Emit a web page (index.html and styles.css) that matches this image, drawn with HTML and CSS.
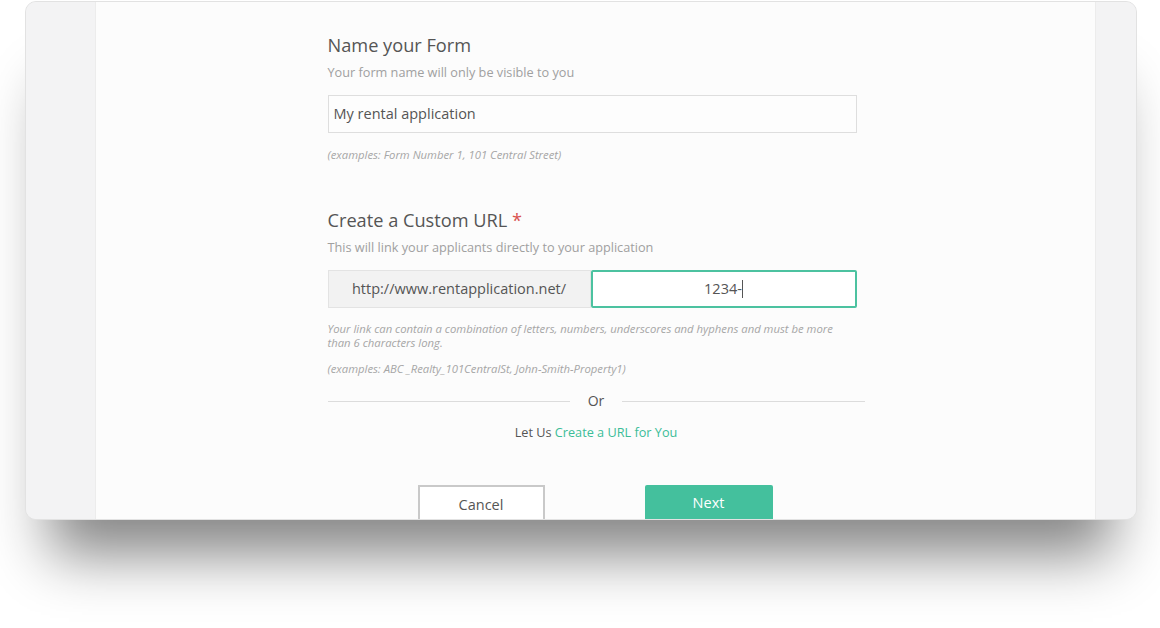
FILE: index.html
```html
<!DOCTYPE html>
<html>
<head>
<meta charset="utf-8">
<link rel="stylesheet" href="styles.css">
</head>
<body>
<div class="frame">
  <div class="side side-left"></div>
  <div class="main">
    <div class="form">
      <h2 class="title">Name your Form</h2>
      <p class="sub">Your form name will only be visible to you</p>
      <div class="input name-input">My rental application</div>
      <p class="hint hint-first">(examples: Form Number 1, 101 Central Street)</p>

      <h2 class="title title-second">Create a Custom URL <span class="req">*</span></h2>
      <p class="sub">This will link your applicants directly to your application</p>
      <div class="url-row">
        <div class="prefix">http://www.rentapplication.net/</div>
        <div class="url-input">1234-<span class="caret"></span></div>
      </div>
      <p class="hint hint-help">Your link can contain a combination of letters, numbers, underscores and hyphens and must be more than 6 characters long.</p>
      <p class="hint hint-ex">(examples: ABC _Realty_101CentralSt, John-Smith-Property1)</p>

      <div class="divider"><span class="line"></span><span class="or">Or</span><span class="line"></span></div>
      <p class="letus">Let Us <a class="link">Create a URL for You</a></p>

      <div class="buttons">
        <div class="btn btn-cancel">Cancel</div>
        <div class="btn btn-next">Next</div>
      </div>
    </div>
  </div>
  <div class="side side-right"></div>
</div>
</body>
</html>
```

FILE: styles.css
```css
html, body {
  margin: 0;
  padding: 0;
  background: #ffffff;
}
body {
  width: 1160px;
  height: 628px;
  overflow: hidden;
  font-family: "Open Sans", "Noto Sans", sans-serif;
}
.frame {
  margin: 1px 0 0 25px;
  width: 1112px;
  height: 519px;
  box-sizing: border-box;
  border: 1px solid #e2e2e2;
  border-radius: 11px;
  overflow: hidden;
  display: flex;
  background: #f3f3f4;
  box-shadow: 0 60px 55px -25px rgba(0, 0, 0, 0.48);
}
.side-left {
  width: 69px;
  flex: none;
  background: #f3f3f4;
  border-right: 1px solid #ececec;
}
.side-right {
  flex: 1;
  background: #f3f3f4;
  border-left: 1px solid #ececec;
}
.main {
  width: 999px;
  flex: none;
  background: #fcfcfc;
  display: flex;
  justify-content: center;
}
.form {
  width: 537px;
  padding-top: 31px;
  padding-left: 1px;
}
.title {
  margin: 0;
  font-size: 18.2px;
  line-height: 24px;
  font-weight: 400;
  color: #555;
}
.title-second {
  margin-top: 46px;
}
.req {
  color: #d9534f;
}
.sub {
  margin: 7px 0 0;
  font-size: 12.7px;
  line-height: 16px;
  color: #a0a0a0;
}
.input {
  margin-top: 15px;
  width: 529px;
  height: 38px;
  box-sizing: border-box;
  border: 1px solid #dedede;
  background: #fdfdfd;
  font-size: 14.5px;
  line-height: 36px;
  padding-left: 5px;
  color: #555;
}
.hint {
  margin: 0;
  font-size: 11.3px;
  line-height: 14px;
  font-style: italic;
  color: #a6a6a6;
}
.hint-first {
  margin-top: 15px;
}
.hint-help {
  margin-top: 14px;
  width: 520px;
}
.hint-ex {
  margin-top: 12px;
}
.url-row {
  margin-top: 15px;
  display: flex;
  width: 529px;
  height: 38px;
}
.prefix {
  width: 263px;
  box-sizing: border-box;
  border: 1px solid #e3e3e3;
  background: #f2f2f2;
  text-align: center;
  font-size: 14.5px;
  line-height: 36px;
  color: #555;
}
.url-input {
  flex: 1;
  box-sizing: border-box;
  border: 2px solid #4cc2a0;
  border-radius: 2px;
  background: #fff;
  text-align: center;
  font-size: 14.5px;
  line-height: 34px;
  color: #555;
  padding-left: 0;
}
.caret {
  display: inline-block;
  width: 1px;
  height: 18px;
  background: #555;
  vertical-align: middle;
  margin-top: -2px;
}
.divider {
  margin-top: 16px;
  display: flex;
  align-items: center;
  height: 18px;
}
.line {
  flex: 1;
  height: 1px;
  background: #dcdcdc;
}
.or {
  font-size: 14px;
  line-height: 18px;
  color: #555;
  padding: 0 18px;
}
.letus {
  margin: 14px 0 0;
  text-align: center;
  font-size: 12.7px;
  line-height: 16px;
  color: #555;
}
.link {
  color: #3bbd98;
}
.buttons {
  margin-top: 45px;
  display: flex;
  justify-content: center;
  gap: 100px;
  padding-right: 2px;
}
.btn {
  width: 127px;
  height: 40px;
  box-sizing: border-box;
  text-align: center;
  font-size: 14.5px;
  line-height: 36px;
}
.btn-cancel {
  border: 2px solid #c9c9c9;
  background: #fff;
  color: #555;
}
.btn-next {
  background: #44c09d;
  color: #fff;
  border-radius: 2px;
  width: 128px;
}
```
